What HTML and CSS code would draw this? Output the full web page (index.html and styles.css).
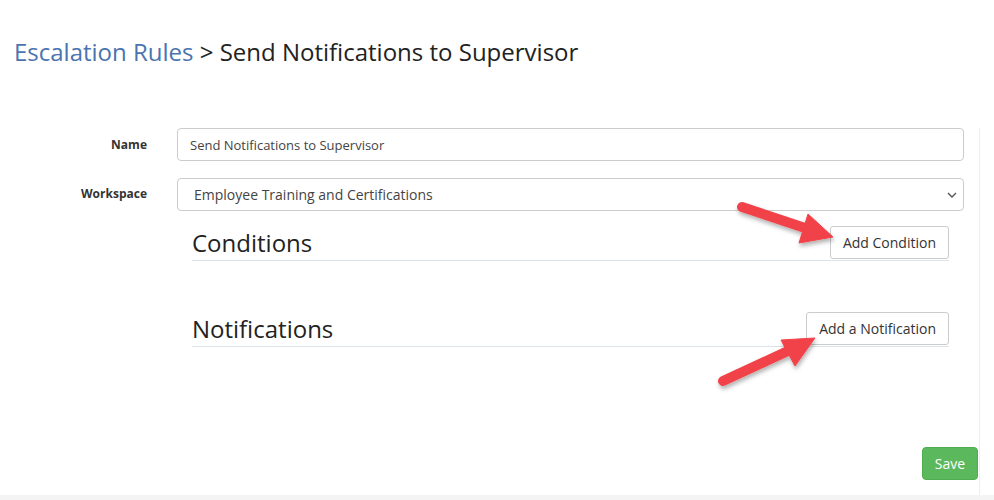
FILE: index.html
```html
<!DOCTYPE html>
<html>
<head>
<meta charset="utf-8">
<link rel="stylesheet" href="styles.css">
</head>
<body>
<div class="page">
  <h1 class="crumbs"><a class="crumb-link" href="#">Escalation Rules</a> &gt; Send Notifications to Supervisor</h1>
  <div class="panel">
    <div class="form">
      <div class="row">
        <label class="label">Name</label>
        <div class="field"><div class="input">Send Notifications to Supervisor</div></div>
      </div>
      <div class="row">
        <label class="label label-ws">Workspace</label>
        <div class="field">
          <div class="select"><span>Employee Training and Certifications</span>
            <svg class="chev" width="10" height="6" viewBox="0 0 10 6"><path d="M1 1 L5 5 L9 1" fill="none" stroke="#555" stroke-width="1.4"/></svg>
          </div>
        </div>
      </div>
      <div class="row">
        <div class="label"></div>
        <div class="field sections">
          <div class="section-head first">
            <h3 class="section-title">Conditions</h3>
            <button class="btn">Add Condition</button>
          </div>
          <div class="section-head second">
            <h3 class="section-title">Notifications</h3>
            <button class="btn">Add a Notification</button>
          </div>
        </div>
      </div>
      <div class="actions"><button class="save">Save</button></div>
    </div>
  </div>
  <div class="footer-strip"></div>
</div>
<svg class="arrows" width="994" height="500" viewBox="0 0 994 500">
  <defs>
    <filter id="sh" x="-20%" y="-20%" width="140%" height="140%">
      <feDropShadow dx="1" dy="3" stdDeviation="2" flood-color="#000" flood-opacity="0.3"/>
    </filter>
  </defs>
  <g filter="url(#sh)" fill="#f2434a" stroke="#f2434a">
    <line x1="742" y1="207" x2="808" y2="229" stroke-width="10" stroke-linecap="round"/>
    <polygon points="833,237 808,214 799,243" stroke-width="1" stroke-linejoin="round"/>
    <line x1="723" y1="381" x2="790" y2="350" stroke-width="10" stroke-linecap="round"/>
    <polygon points="815,338 781,340 795,366" stroke-width="1" stroke-linejoin="round"/>
  </g>
</svg>
</body>
</html>
```

FILE: styles.css
```css
* { box-sizing: border-box; }
html, body { margin: 0; padding: 0; }
body {
  font-family: "Open Sans", "Noto Sans", sans-serif;
  color: #333;
  background: #fff;
  width: 994px;
  height: 500px;
  overflow: hidden;
  position: relative;
}
.page { display: flex; flex-direction: column; height: 500px; }
.crumbs {
  margin: 0;
  padding: 35px 0 0 14px;
  font-size: 24px;
  font-weight: 400;
  line-height: 33px;
  color: #222;
  height: 128px;
}
.crumb-link { color: #4a74b0; text-decoration: none; }
.panel {
  flex: 1;
  width: 980px;
  border-right: 1px solid #eee;
}
.form { display: flex; flex-direction: column; }
.row { display: flex; }
.row + .row { margin-top: 17px; }
.row:nth-child(3) { margin-top: 0; }
.label {
  width: 147px;
  flex: none;
  text-align: right;
  font-size: 12px;
  font-weight: 700;
  padding-top: 8px;
  line-height: 17px;
  color: #333;
}
.label-ws { padding-top: 7px; }
.field { margin-left: 30px; width: 787px; }
.input, .select {
  height: 33px;
  border: 1px solid #ccc;
  border-radius: 4px;
  display: flex;
  align-items: center;
}
.input { font-size: 13px; padding-left: 12px; color: #444; }
.select { height: 33px; font-size: 14px; padding-left: 16px; padding-right: 6px; justify-content: space-between; color: #444; }
.sections { padding: 0 15px; }
.section-head {
  display: flex;
  justify-content: space-between;
  align-items: flex-end;
  border-bottom: 1px solid #dde3ea;
}
.section-head.first { margin-top: 15px; padding-bottom: 1px; }
.section-head.second { margin-top: 51px; padding-bottom: 1px; }
.section-title {
  margin: 0;
  font-size: 24px;
  font-weight: 400;
  line-height: 33px;
  color: #222;
}
.btn {
  font-family: "Open Sans", "Noto Sans", sans-serif;
  font-size: 14px;
  color: #333;
  background: #fff;
  border: 1px solid #ccc;
  border-radius: 3px;
  height: 33px;
  padding: 0 12px;
}
.actions { display: flex; justify-content: flex-end; margin-top: 100px; }
.save {
  font-family: "Open Sans", "Noto Sans", sans-serif;
  font-size: 14px;
  color: #fff;
  background: #5cb85c;
  border: 1px solid #4cae4c;
  border-radius: 4px;
  height: 33px;
  width: 56px;
  margin-right: 1px;
}
.footer-strip { height: 5px; background: #f4f4f4; }
.arrows { position: absolute; left: 0; top: 0; pointer-events: none; }
```
